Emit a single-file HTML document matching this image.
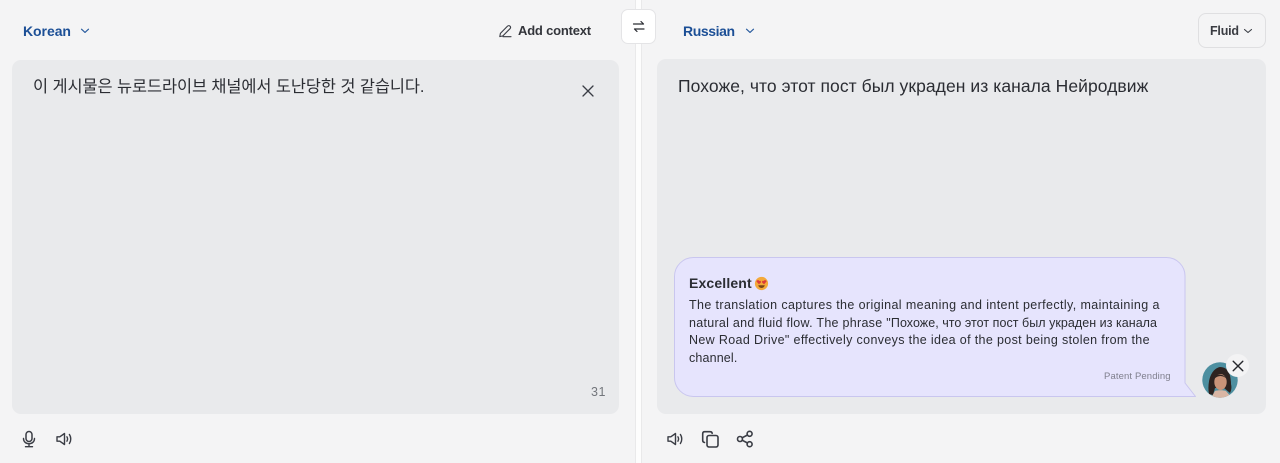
<!DOCTYPE html>
<html><head><meta charset="utf-8">
<style>
html,body{margin:0;padding:0}
body{width:1280px;height:463px;overflow:hidden;background:#f4f4f5;position:relative;font-family:"Liberation Sans","Noto Sans CJK KR",sans-serif;color:#2b2d33}
.a{position:absolute;white-space:nowrap}
svg{position:absolute;fill:none;stroke:#3a3d45;stroke-width:1.5;stroke-linecap:round;stroke-linejoin:round}
.l{font-size:14px;font-weight:bold;color:#1c4f96;line-height:18px}
.t{font-size:12.5px;line-height:18px;color:#2b2d33}
</style></head><body>
<div class="a" style="left:635px;top:0;width:7px;height:463px;background:#fdfdfd;border-left:1px solid #e9e9ea;border-right:1px solid #e9e9ea;box-sizing:border-box"></div>

<div class="a" style="left:12px;top:60px;width:607px;height:354px;background:#e9eaec;border-radius:9px"></div>
<div class="a" style="left:657px;top:59px;width:609px;height:355px;background:#e9eaec;border-radius:9px"></div>

<div class="a l" style="left:23px;top:22px;letter-spacing:-.05px">Korean</div>
<svg style="left:80px;top:26px" width="10" height="10" viewBox="0 0 10 10"><path d="M1.5 3.2L5 6.4L8.5 3.2" style="stroke:#2a5c9f;stroke-width:1.2"/></svg>

<svg style="left:498px;top:24px" width="15" height="15" viewBox="0 0 15 15"><path d="M1.8 12.6L2.4 9.4L9.4 2.3C10.2 1.5 11.3 1.5 12 2.2C12.7 2.9 12.7 4 11.9 4.8L4.9 11.9ZM5 12.7H13" stroke-width="1.1"/></svg>
<div class="a" style="left:518px;top:22px;font-size:13px;font-weight:bold;line-height:18px;color:#33353b;letter-spacing:-.2px">Add context</div>

<div class="a" style="left:621px;top:9px;width:35px;height:35px;background:#fff;border:1px solid #e4e4e6;border-radius:7px;box-sizing:border-box"></div>
<svg style="left:632px;top:20px" width="14" height="13" viewBox="0 0 14 13"><path d="M1.5 4H11.5M9 1.5L11.5 4M12 9H2.5M5 11.5L2.5 9" stroke-width="1.2" style="stroke:#2b2d33"/></svg>

<div class="a l" style="left:683px;top:22px;letter-spacing:-.4px">Russian</div>
<svg style="left:745px;top:26px" width="10" height="10" viewBox="0 0 10 10"><path d="M1.5 3.2L5 6.4L8.5 3.2" style="stroke:#2a5c9f;stroke-width:1.2"/></svg>

<div class="a" style="left:1198px;top:13px;width:68px;height:35px;border:1px solid #dfdfe1;border-radius:8px;box-sizing:border-box;background:#f4f4f5"></div>
<div class="a" style="left:1210px;top:22px;font-size:12.5px;font-weight:bold;line-height:18px;color:#3a3c42;letter-spacing:-.2px">Fluid</div>
<svg style="left:1243px;top:26px" width="10" height="10" viewBox="0 0 10 10"><path d="M1.5 3.5L5 6.5L8.5 3.5" stroke-width="1.1"/></svg>

<div class="a" style="left:33px;top:76px;font-size:16.4px;line-height:22px;color:#2b2d33;letter-spacing:-.08px">이 게시물은 뉴로드라이브 채널에서 도난당한 것 같습니다.</div>
<svg style="left:581px;top:84px" width="14" height="14" viewBox="0 0 14 14"><path d="M2 2L12 12M12 2L2 12" stroke-width="1.3"/></svg>
<div class="a" style="left:591px;top:384px;font-size:12.5px;line-height:16px;color:#73767c;letter-spacing:.5px">31</div>

<div class="a" style="left:678px;top:75px;font-size:17.5px;line-height:22px;color:#2b2d33;letter-spacing:.06px">Похоже, что этот пост был украден из канала Нейродвиж</div>

<svg style="left:674px;top:257px" width="524" height="142" viewBox="0 0 524 142"><path d="M19.5 .5H492.5A18.5 18.5 0 0 1 511 19V126L521.5 139.5H19.5A19 19 0 0 1 .5 120.5V19.5A19 19 0 0 1 19.5 .5Z" style="fill:#e6e4fd;stroke:#c9c6ef;stroke-width:1"/></svg>
<div class="a" style="left:689px;top:274px;font-size:14px;font-weight:bold;line-height:18px;color:#2b2d33;letter-spacing:.15px">Excellent</div>
<svg style="left:754px;top:276px" width="15" height="15" viewBox="0 0 15 15"><circle cx="7.5" cy="7.5" r="6.6" fill="#f4a93a" stroke="none"/><path d="M2.4 5.4C3 3.7 5 3.9 5.3 5.1C6 4.2 7.5 5.2 6.8 6.6L4.9 8.2Z M12.6 5.4C12 3.7 10 3.9 9.7 5.1C9 4.2 7.5 5.2 8.2 6.6L10.1 8.2Z" fill="#dc3b39" stroke="none"/><path d="M4.2 9.3H10.8C10.4 11 9.1 12 7.5 12C5.9 12 4.6 11 4.2 9.3Z" fill="#7a4517" stroke="none"/></svg>
<div class="a t" style="left:689px;top:296px;letter-spacing:.385px">The translation captures the original meaning and intent perfectly, maintaining a</div>
<div class="a t" style="left:689px;top:314px;letter-spacing:.28px">natural and fluid flow. The phrase "<span style="letter-spacing:.04px">Похоже, что этот пост был украден из канала</span></div>
<div class="a t" style="left:689px;top:331px;letter-spacing:.35px">New Road Drive" effectively conveys the idea of the post being stolen from the</div>
<div class="a t" style="left:689px;top:349px;letter-spacing:.15px">channel.</div>
<div class="a" style="left:1104px;top:370px;font-size:9.5px;line-height:14px;color:#7f7f8d;letter-spacing:.12px">Patent Pending</div>

<svg style="left:1202px;top:362px" width="37" height="36" viewBox="0 0 37 36">
<defs><clipPath id="c"><circle cx="18" cy="18" r="17.7"/></clipPath></defs>
<g clip-path="url(#c)" stroke="none" style="stroke:none">
<rect width="37" height="36" fill="#4d8fa0" stroke="none"/>
<path d="M7 32C5 22 8 7 18 5C27 5 29 14 29 22C30 26 29 29 28 31L22 26H13L11 33Z" fill="#2e2320" stroke="none"/>
<path d="M13 29C15 28 22 28 24 29L30 36H9Z" fill="#d9b6a4" stroke="none"/>
<ellipse cx="18.5" cy="20" rx="6.2" ry="8" fill="#c99378" stroke="none"/>
<path d="M12 17C13 12 20 10 25 17C21 13 16 13 12 17Z" fill="#2e2320" stroke="none"/>
</g>
</svg>
<div class="a" style="left:1226px;top:354px;width:23px;height:23px;background:#f3f3f4;border-radius:50%"></div>
<svg style="left:1232px;top:360px" width="12" height="12" viewBox="0 0 12 12"><path d="M1.2 1.2L10.8 10.8M10.8 1.2L1.2 10.8" stroke-width="1.4" style="stroke:#26282d"/></svg>

<svg style="left:20px;top:430px" width="18" height="18" viewBox="0 0 18 18"><rect x="6" y="1.5" width="6" height="10" rx="3" stroke-width="1.5"/><path d="M3.5 8.5C3.5 11.7 5.9 13.7 9 13.7C12.1 13.7 14.5 11.7 14.5 8.5M9 13.7V16.5M5.5 16.7H12.5" stroke-width="1.4"/></svg>
<svg style="left:55px;top:430px" width="18" height="18" viewBox="0 0 18 18"><path d="M2 6.8H4.8L9.5 3.5V14.5L4.8 11.2H2Z" stroke-width="1.4"/><path d="M11.9 6.8C12.7 8.1 12.7 9.9 11.9 11.2M14.4 4.5C16.2 7 16.2 11 14.4 13.5" stroke-width="1.4"/></svg>

<svg style="left:666px;top:430px" width="18" height="18" viewBox="0 0 18 18"><path d="M2 6.8H4.8L9.5 3.5V14.5L4.8 11.2H2Z" stroke-width="1.4"/><path d="M11.9 6.8C12.7 8.1 12.7 9.9 11.9 11.2M14.4 4.5C16.2 7 16.2 11 14.4 13.5" stroke-width="1.4"/></svg>
<svg style="left:701px;top:430px" width="18" height="18" viewBox="0 0 18 18"><rect x="6" y="5.5" width="11" height="11.5" rx="2" stroke-width="1.6"/><path d="M3.5 12.5C2.3 12.3 1.7 11.6 1.7 10.4V3.7C1.7 2.4 2.4 1.7 3.7 1.7H9C10.2 1.7 11 2.3 11.2 3.3" stroke-width="1.6"/></svg>
<svg style="left:736px;top:430px" width="18" height="18" viewBox="0 0 18 18"><circle cx="13.6" cy="3.8" r="2.5" stroke-width="1.6"/><circle cx="4" cy="9" r="2.5" stroke-width="1.6"/><circle cx="13.6" cy="14.2" r="2.5" stroke-width="1.6"/><path d="M6.1 7.8L11.5 5M6.1 10.2L11.5 13" stroke-width="1.6"/></svg>
</body></html>
